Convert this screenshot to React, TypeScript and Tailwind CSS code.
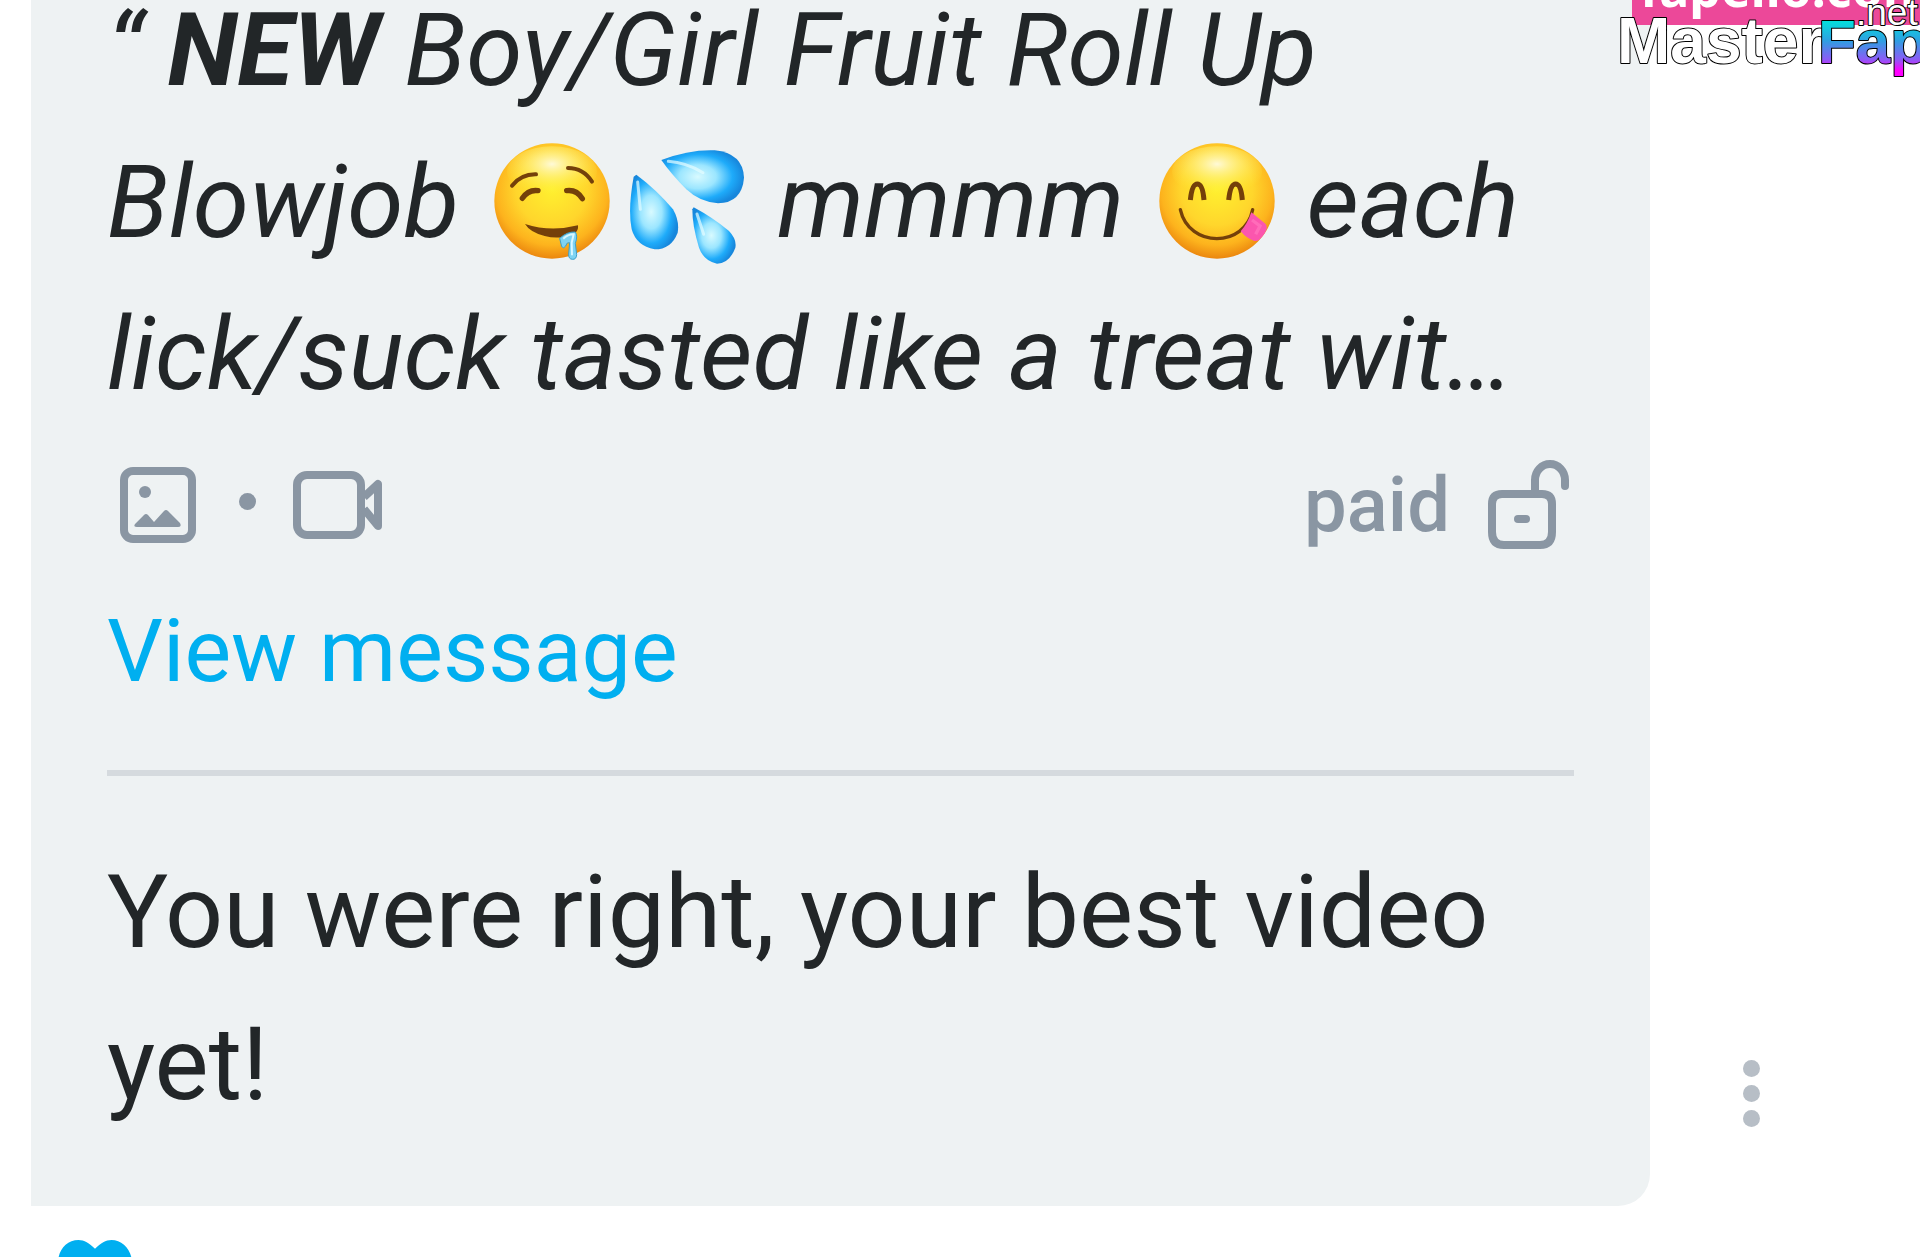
import type { ReactNode } from "react";

function FaceBase({ id, cx, cy }: { id: string; cx: number; cy: number }) {
    return (
        <>
            <defs>
                <radialGradient id={id} cx="50%" cy="40%" r="62%">
                    <stop offset="0%" stopColor="#fff02f" />
                    <stop offset="50%" stopColor="#ffd62c" />
                    <stop offset="78%" stopColor="#fdb31d" />
                    <stop offset="100%" stopColor="#e87f0c" />
                </radialGradient>
                <radialGradient id={`${id}-shine`} cx="50%" cy="35%" r="60%">
                    <stop offset="0%" stopColor="#fffbe0" stopOpacity="0.95" />
                    <stop offset="100%" stopColor="#fff13a" stopOpacity="0" />
                </radialGradient>
            </defs>
            <circle cx={cx} cy={cy} r="173" fill={`url(#${id})`} />
            <ellipse cx={cx} cy={cy - 88} rx="135" ry="76" fill={`url(#${id}-shine)`} />
        </>
    );
}

function DroolEmoji() {
    return (
        <svg role="img" aria-label="drooling face" viewBox="42 39 348 348" className="mr-[18px] ml-2.5 inline-block size-[116px] overflow-visible align-[-22px]">
            <FaceBase id="drool-face" cx={216} cy={213} />
            <g fill="none" stroke="#74400a" strokeLinecap="round">
                <path d="M96 167 Q124 132 168 133" strokeWidth="12" />
                <path d="M264 114 Q310 114 336 155" strokeWidth="12" />
                <path d="M127 205 Q145 178 174 182" strokeWidth="16" />
                <path d="M260 182 Q290 178 307 206" strokeWidth="16" />
            </g>
            <path d="M135 282 Q212 307 294 286 Q296 300 284 311 Q240 330 194 318 Q150 307 135 282Z" fill="#74400a" />
            <path
                d="M239 325 Q262 304 286 306 Q294 318 286 340 L290 374 Q289 389 277 388 Q265 387 266 372 L269 338 Q260 336 257 348 Q251 358 245 350 Z"
                fill="#7ed3f3"
                stroke="#3d9fca"
                strokeWidth="3"
            />
            <path d="M250 326 Q266 312 281 313 L275 338 L276 376" fill="none" stroke="#d8f6ff" strokeWidth="6" />
        </svg>
    );
}

function DropsEmoji() {
    return (
        <svg role="img" aria-label="sweat droplets" viewBox="445 50 354 354" className="mr-1.5 inline-block size-[118px] align-[-27px]">
            <defs>
                <radialGradient id="drop" cx="44%" cy="50%" r="56%">
                    <stop offset="0%" stopColor="#d8faff" />
                    <stop offset="40%" stopColor="#9ce6ff" />
                    <stop offset="75%" stopColor="#1eabfa" />
                    <stop offset="100%" stopColor="#1787dc" />
                </radialGradient>
            </defs>
            <g fill="url(#drop)">
                <path d="M545 92 Q630 60 705 63 Q790 72 793 145 Q787 220 715 222 Q660 218 620 180 Q575 135 545 92Z" />
                <path d="M470 136 Q530 180 580 240 Q600 275 594 310 Q575 360 525 360 Q470 350 456 300 Q444 240 462 142Z" />
                <path d="M642 234 Q700 265 748 305 Q772 330 767 355 Q750 402 712 403 Q672 395 658 355 Q638 290 638 240Z" />
            </g>
            <g fill="none" stroke="#e6fcff" strokeLinecap="round" strokeOpacity="0.7" strokeWidth="9">
                <path d="M566 96 Q620 100 670 130" />
                <path d="M474 158 L482 240" />
                <path d="M652 254 L672 315" />
            </g>
        </svg>
    );
}

function YumEmoji() {
    return (
        <svg role="img" aria-label="face savoring food" viewBox="55 39 348 348" className="mr-1.5 ml-2.5 inline-block size-[116px] align-[-22px]">
            <FaceBase id="yum-face" cx={229} cy={213} />
            <g fill="none" stroke="#74400a">
                <path d="M149 210 Q154 162 170 162 Q186 162 190 210" strokeWidth="15" />
                <path d="M264 210 Q269 162 285 162 Q301 162 305 210" strokeWidth="15" />
                <path d="M119 239 C145 355 313 355 336 239" strokeWidth="10" strokeLinecap="round" />
            </g>
            <path d="M332 247 L374 281 Q383 290 373 308 Q356 336 341 333 Q318 326 300 304 Q320 282 332 247Z" fill="#fb56ae" />
            <path d="M334 270 L358 288 L345 313" fill="none" stroke="#ff6cb9" strokeWidth="10" />
        </svg>
    );
}

function PhotoIcon() {
    return (
        <svg viewBox="0 0 76 76" className="size-[76px]" aria-hidden="true">
            <rect x="4" y="4" width="68" height="68" rx="9" fill="none" stroke="currentColor" strokeWidth="8" />
            <circle cx="25" cy="25" r="6" fill="currentColor" />
            <path d="M15 57 L24 48 Q26 46 28 48 L34 55 L44 44 Q46 42 48 44 L60 56 Q62 60 58 60 L17 60 Q13 60 15 57Z" fill="currentColor" />
        </svg>
    );
}

function VideoIcon() {
    return (
        <svg viewBox="0 0 90 68" className="h-[68px] w-[90px]" aria-hidden="true" fill="none" stroke="currentColor" strokeWidth="8" strokeLinejoin="round">
            <rect x="4" y="4" width="64" height="60" rx="10" />
            <path d="M71 26 L85 13 V55 L71 38" />
        </svg>
    );
}

function UnlockIcon() {
    return (
        <svg viewBox="0 0 82 90" className="h-[90px] w-[82px]" aria-hidden="true" fill="none" stroke="currentColor" strokeWidth="8" strokeLinecap="round">
            <path d="M14 34 H54 Q64 34 64 44 V72 Q64 85 52 85 H16 Q4 85 4 72 V44 Q4 34 14 34Z" />
            <path d="M47 32 V20 A15 16 0 0 1 77 20 V26" />
            <path d="M30 59 H38" />
        </svg>
    );
}

function HeartIcon() {
    return (
        <svg viewBox="0 0 76 70" className="h-[68px] w-[74px]" aria-hidden="true">
            <path d="M38 9 C32 3 27 0 21 0 C9 0 0 10 0 23 C0 42 21 56 38 70 C55 56 76 42 76 23 C76 10 66 0 55 0 C49 0 44 3 38 9Z" fill="#00aff0" />
        </svg>
    );
}

function Watermark() {
    return (
        <div className="absolute top-0 right-0 h-[90px] w-[302px] overflow-hidden whitespace-nowrap">
            <div className="ml-[14px] h-[25px] overflow-hidden bg-[#ec4899] pl-2">
                <div className="-mt-12 font-['Noto_Sans',sans-serif] text-[50px] leading-[72px] font-bold text-white">fapello.com</div>
            </div>
            <svg viewBox="0 0 302 90" className="absolute inset-0 h-[90px] w-[302px] font-['Liberation_Sans',sans-serif]" stroke="#000" strokeWidth="2" strokeLinejoin="round">
                <defs>
                    <linearGradient id="logo" gradientUnits="userSpaceOnUse" x1="0" y1="16" x2="0" y2="78">
                        <stop offset="5%" stopColor="#00e5dc" />
                        <stop offset="40%" stopColor="#2f9fe2" />
                        <stop offset="70%" stopColor="#8b5cf6" />
                        <stop offset="88%" stopColor="#ff00ff" />
                    </linearGradient>
                </defs>
                <text x="-1" y="63" fontSize="64" fontWeight="700" fill="#fff" paintOrder="stroke">Master</text>
                <text x="200" y="63" fontSize="62" fontWeight="700" fill="url(#logo)" paintOrder="stroke">Fap</text>
                <text x="238" y="25" fontSize="37" fill="#fff" paintOrder="stroke">.net</text>
            </svg>
        </div>
    );
}

function Quote({ children }: { children: ReactNode }) {
    return <blockquote className="text-[102px] leading-[152px] whitespace-nowrap italic">{children}</blockquote>;
}

export default function App() {
    return (
        <main className="relative h-screen overflow-hidden bg-white font-[Roboto,sans-serif] text-[#222628]">
            <div className="-mt-[26px] flex items-end pl-[31px]">
                <article className="min-w-0 flex-1 rounded-br-[32px] bg-[#eef2f3] px-[76px] pb-[66px]">
                    <Quote>
                        “ <b>NEW</b> Boy/Girl Fruit Roll Up
                        <br />
                        Blowjob <DroolEmoji />
                        <DropsEmoji /> mmmm <YumEmoji /> each
                        <br />
                        lick/suck tasted like a treat wit…
                    </Quote>

                    <div className="flex h-[150px] items-center justify-between pr-1 pl-[13px] text-[#8a96a3]">
                        <div className="flex items-center">
                            <PhotoIcon />
                            <span className="mr-[37px] mb-2 ml-[43px] size-[17px] rounded-full bg-[#8a96a3]" />
                            <VideoIcon />
                        </div>
                        <div className="flex items-center gap-[38px] text-[76px] leading-[90px] font-medium">
                            <span>paid</span>
                            <UnlockIcon />
                        </div>
                    </div>

                    <a href="#message" className="block text-[88px] leading-[142px] text-[#00aff0]">View message</a>

                    <hr className="mt-[48px] border-t-[6px] border-[#d5dade]" />

                    <p className="mt-[60px] text-[102px] leading-[152px] whitespace-nowrap">
                        You were right, your best video
                        <br />
                        yet!
                    </p>
                </article>

                <div className="w-[270px] pb-[79px] pl-[93px]">
                    <button type="button" aria-label="More options" className="flex flex-col gap-2">
                        <span className="size-[17px] rounded-full bg-[#b7bec6]" />
                        <span className="size-[17px] rounded-full bg-[#b7bec6]" />
                        <span className="size-[17px] rounded-full bg-[#b7bec6]" />
                    </button>
                </div>
            </div>

            <button type="button" aria-label="Like" className="mt-[34px] ml-[58px] block">
                <HeartIcon />
            </button>

            <Watermark />
        </main>
    );
}
